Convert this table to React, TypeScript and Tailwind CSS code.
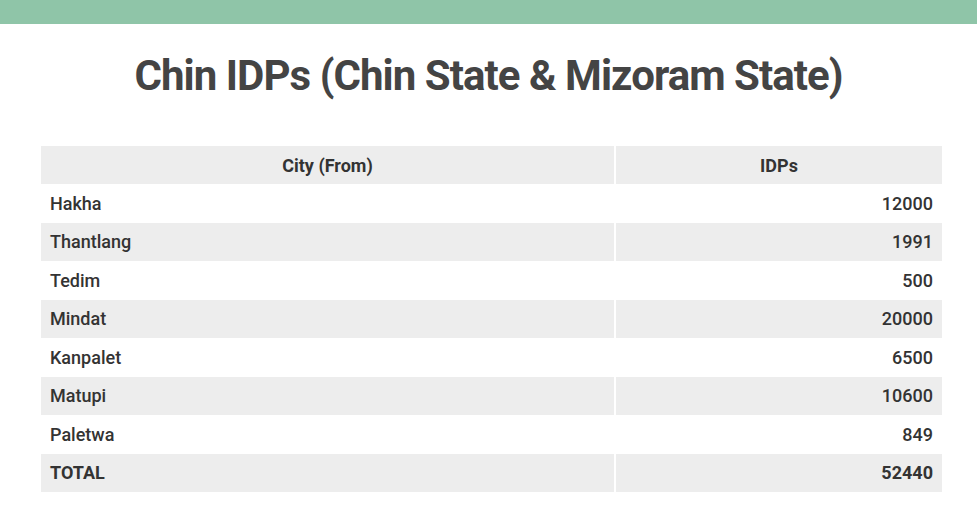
const rows: [string, string][] = [
  ["Hakha", "12000"],
  ["Thantlang", "1991"],
  ["Tedim", "500"],
  ["Mindat", "20000"],
  ["Kanpalet", "6500"],
  ["Matupi", "10600"],
  ["Paletwa", "849"],
];

export default function App() {
  return (
    <div className="w-[977px] h-[531px] bg-white font-['Roboto',sans-serif] text-[#333]">
      <div className="h-[24px] bg-[#8fc5a8]" />
      <h1 className="mt-[27px] text-center text-[42px] leading-[50px] tracking-[-0.95px] font-bold text-[#444]">
        Chin IDPs (Chin State &amp; Mizoram State)
      </h1>
      <div className="mt-[45px] px-[41px]">
        <table className="w-[901px] border-collapse text-[18px] font-medium">
          <thead>
            <tr className="bg-[#ededed] h-[38px]">
              <th className="w-[574px] border-r-2 border-white font-bold text-center">City (From)</th>
              <th className="font-bold text-center">IDPs</th>
            </tr>
          </thead>
          <tbody>
            {rows.map(([city, n], i) => (
              <tr key={city} className={`h-[38.5px] ${i % 2 === 1 ? "bg-[#ededed]" : "bg-white"}`}>
                <td className="pl-[9px] border-r-2 border-white">{city}</td>
                <td className="pr-[9px] text-right">{n}</td>
              </tr>
            ))}
            <tr className="h-[38.5px] bg-[#ededed] font-bold">
              <td className="pl-[9px] border-r-2 border-white">TOTAL</td>
              <td className="pr-[9px] text-right">52440</td>
            </tr>
          </tbody>
        </table>
      </div>
    </div>
  );
}
